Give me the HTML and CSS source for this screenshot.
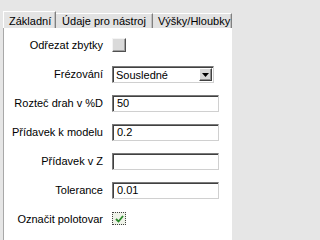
FILE: index.html
```html
<!DOCTYPE html>
<html>
<head>
<meta charset="utf-8">
<link rel="stylesheet" href="styles.css">
</head>
<body>
<div class="dialog">
  <div class="tabs">
    <div class="tab active">Základní</div>
    <div class="tab">Údaje pro nástroj</div>
    <div class="tab last">Výšky/Hloubky</div>
  </div>
  <div class="panel">
    <div class="row">
      <span class="label">Odřezat zbytky</span>
      <span class="check raised"></span>
    </div>
    <div class="row">
      <span class="label">Frézování</span>
      <span class="select"><span class="value">Sousledné</span><span class="arrow"><svg width="7" height="4" viewBox="0 0 7 4"><path d="M0 0H7L3.5 4Z" fill="#000"/></svg></span></span>
    </div>
    <div class="row">
      <span class="label">Rozteč drah v %D</span>
      <span class="input">50</span>
    </div>
    <div class="row">
      <span class="label">Přídavek k modelu</span>
      <span class="input">0.2</span>
    </div>
    <div class="row">
      <span class="label">Přídavek v Z</span>
      <span class="input"></span>
    </div>
    <div class="row">
      <span class="label">Tolerance</span>
      <span class="input">0.01</span>
    </div>
    <div class="row">
      <span class="label">Označit polotovar</span>
      <span class="check checked"><svg width="9" height="8" viewBox="0 0 9 8"><path d="M1 4L3.5 6.5L8 1" fill="none" stroke="#2a8a2a" stroke-width="1.8"/></svg></span>
    </div>
  </div>
</div>
</body>
</html>
```
FILE: styles.css
```css
html, body {
  margin: 0;
  padding: 0;
  background: #e6e6e6;
  font-family: "Liberation Sans", Arial, sans-serif;
  font-size: 11px;
  color: #000;
}
.dialog {
  width: 233px;
  height: 240px;
  display: flex;
  flex-direction: column;
}
.tabs {
  display: flex;
  align-items: flex-end;
  padding: 12px 0 0 3px;
  height: 16px;
}
.tab {
  height: 14px;
  line-height: 14px;
  padding: 0 5px;
  background: #e2e2e2;
  border-top: 1px solid #fff;
  border-right: 1px solid #808080;
  box-shadow: inset -1px 0 0 #c0c0c0;
  text-align: center;
}
.tab.active {
  height: 16px;
  line-height: 18px;
  width: 41px;
  border-left: 1px solid #fff;
  padding: 0 5px 0 5px;
  background: #e4e4e4;
}
.tab:nth-child(2) {
  width: 86px;
}
.tab.last {
  width: 68px;
}
.panel {
  flex: 1;
  background: #fff;
  margin-left: 3px;
  margin-right: 1px;
  border-left: 1px solid #a8a8a8;
  padding-top: 2px;
  display: grid;
  grid-template-columns: 99px auto;
  grid-auto-rows: 29px;
  column-gap: 9px;
  align-content: start;
}
.row {
  display: contents;
}
.label {
  align-self: center;
  text-align: right;
  white-space: nowrap;
}
.input {
  align-self: center;
  width: 101px;
  height: 15px;
  line-height: 15px;
  border: 1px solid #7a7a7a;
  border-right-color: #d0d0d0;
  border-bottom-color: #d0d0d0;
  box-shadow: inset 1px 1px 0 #404040;
  padding-left: 4px;
  background: #fff;
  margin-top: 1px;
}
.select {
  align-self: center;
  width: 102px;
  height: 17px;
  box-sizing: border-box;
  border: 1px solid #7a7a7a;
  border-right-color: #d0d0d0;
  border-bottom-color: #d0d0d0;
  box-shadow: inset 1px 1px 0 #404040;
  display: flex;
  align-items: center;
  justify-content: space-between;
  margin-top: 2px;
}
.select .value {
  padding-left: 3px;
  line-height: 15px;
  padding-top: 1px;
}
.select .arrow {
  width: 13px;
  height: 13px;
  margin-right: 1px;
  box-sizing: border-box;
  background: #d8d8d8;
  border: 1px solid #fff;
  border-right-color: #404040;
  border-bottom-color: #404040;
  box-shadow: inset -1px -1px 0 #909090;
  display: flex;
  align-items: center;
  justify-content: center;
}
.check {
  align-self: center;
  width: 14px;
  height: 14px;
  box-sizing: border-box;
  display: flex;
  align-items: center;
  justify-content: center;
}
.check.raised {
  background: #dadada;
  border: 1px solid #f4f4f4;
  border-right-color: #505050;
  border-bottom-color: #505050;
  box-shadow: inset -1px -1px 0 #a0a0a0;
}
.check.checked {
  width: 14px;
  height: 13px;
  background: #eef2e8;
  border: 1px dotted #404040;
}
```
